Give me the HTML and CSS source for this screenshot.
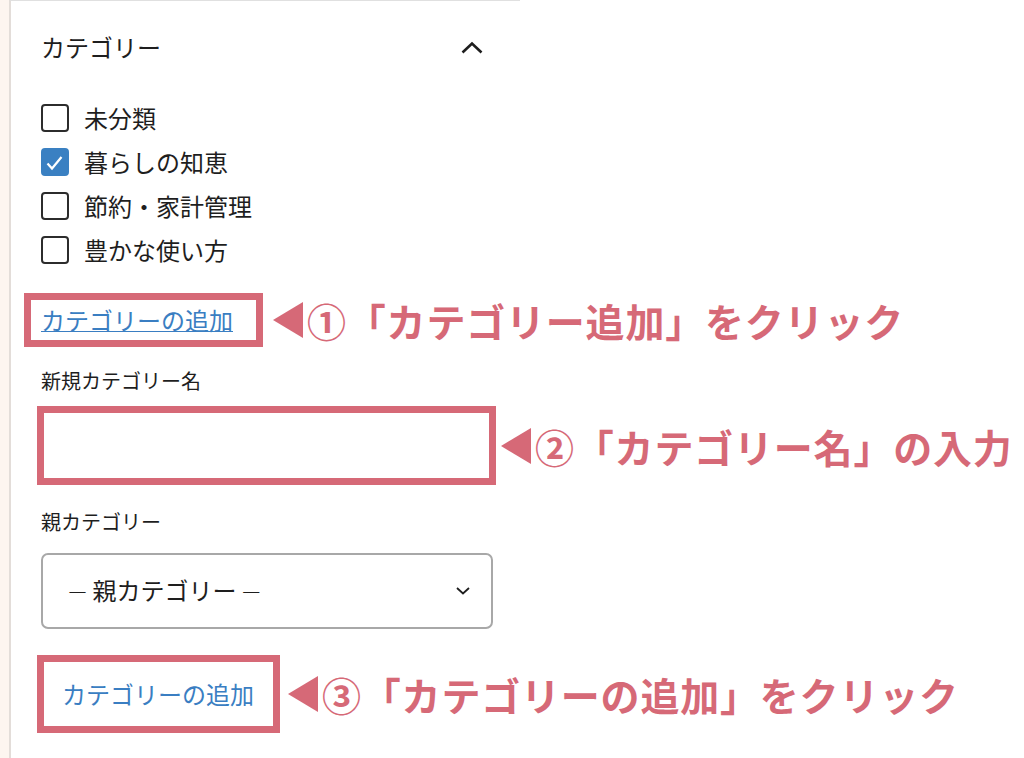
FILE: index.html
```html
<!DOCTYPE html>
<html lang="ja">
<head>
<meta charset="utf-8">
<title>カテゴリー</title>
<link rel="stylesheet" href="styles.css">
</head>
<body>
<div class="page">
  <div class="strip"></div>
  <section class="panel">
    <header class="panel-head">
      <h2 class="panel-title">カテゴリー</h2>
      <svg class="chev-up" width="24" height="24" viewBox="0 0 24 24"><path d="M2.5 17.5 L12 8.5 L21.5 17.5" fill="none" stroke="#1e1e1e" stroke-width="2.6"/></svg>
    </header>
    <ul class="cats">
      <li class="cat"><span class="box"></span><span>未分類</span></li>
      <li class="cat"><span class="box on"><svg width="28" height="28" viewBox="0 0 28 28"><path d="M6.5 15.5 L11 20.5 L20.5 9" fill="none" stroke="#fff" stroke-width="2.2"/></svg></span><span>暮らしの知恵</span></li>
      <li class="cat"><span class="box"></span><span>節約・家計管理</span></li>
      <li class="cat"><span class="box"></span><span>豊かな使い方</span></li>
    </ul>
    <div class="row row-1">
      <div class="mark mark-link"><a class="link" href="#">カテゴリーの追加</a></div>
      <div class="note"><span class="tri"></span><span>①「カテゴリー追加」をクリック</span></div>
    </div>
    <label class="field-label">新規カテゴリー名</label>
    <div class="row row-2">
      <div class="mark mark-input"></div>
      <div class="note"><span class="tri"></span><span>②「カテゴリー名」の入力</span></div>
    </div>
    <label class="field-label parent">親カテゴリー</label>
    <div class="select"><span class="select-text"><span class="dash">—</span> 親カテゴリー <span class="dash">—</span></span><svg width="14" height="8" viewBox="0 0 14 8"><path d="M1 1 L7 6.5 L13 1" fill="none" stroke="#1e1e1e" stroke-width="1.8"/></svg></div>
    <div class="row row-3">
      <div class="mark mark-btn">カテゴリーの追加</div>
      <div class="note"><span class="tri"></span><span>③「カテゴリーの追加」をクリック</span></div>
    </div>
  </section>
</div>
</body>
</html>
```

FILE: styles.css
```css
body {
  margin: 0;
  background: #fff;
  font-family: "Noto Sans CJK JP", "Noto Sans", sans-serif;
  color: #1e1e1e;
}
.page {
  display: flex;
  height: 758px;
  overflow: hidden;
}
.strip {
  width: 9px;
  flex: none;
  background: #fdf5f0;
}
.panel {
  flex: none;
  width: 452px;
  padding: 0 27px 0 30px;
  border-left: 2px solid #e3ddd9;
  border-top: 1px solid #e0e0e0;
}
.panel-head {
  height: 92px;
  display: flex;
  align-items: center;
  justify-content: space-between;
  padding-right: 9px;
}
.panel-title {
  margin: 0;
  font-size: 24px;
  font-weight: 400;
  line-height: 32px;
}
.chev-up { display: block; }
.cats {
  list-style: none;
  margin: 11px 0 0;
  padding: 0;
  display: flex;
  flex-direction: column;
  gap: 16px;
}
.cat {
  display: flex;
  align-items: center;
  gap: 15px;
  height: 28px;
  font-size: 24px;
  line-height: 28px;
}
.box {
  width: 28px;
  height: 28px;
  box-sizing: border-box;
  border: 2px solid #2c2c2c;
  border-radius: 4px;
  flex: none;
  position: relative;
}
.box.on {
  background: #3a80c2;
  border-color: #3a80c2;
}
.box.on svg {
  position: absolute;
  left: -2px;
  top: -2px;
}
.row {
  display: flex;
  align-items: center;
  white-space: nowrap;
}
.mark {
  flex: none;
  box-sizing: border-box;
  border: 7px solid #d66977;
  background: #fff;
}
.row-1 {
  margin: 29px 0 0 -17px;
  gap: 10px;
}
.mark-link {
  height: 54px;
  padding: 0 23px 0 10px;
  font-size: 24px;
  line-height: 40px;
}
.link {
  color: #3a7ec2;
  text-decoration: underline;
  text-decoration-thickness: 1px;
}
.field-label {
  display: block;
  font-size: 20px;
  line-height: 28px;
  margin-top: 20px;
}
.field-label.parent { margin-top: 23px; }
.row-2 {
  margin: 11px 0 0 -4px;
  gap: 5px;
}
.mark-input {
  width: 459px;
  height: 79px;
}
.select {
  margin-top: 17px;
  height: 76px;
  box-sizing: border-box;
  border: 2px solid #a8a8a8;
  border-radius: 7px;
  display: flex;
  align-items: center;
  justify-content: space-between;
  padding: 0 21px 0 25px;
  font-size: 24px;
}
.select-text { line-height: 32px; }
.dash {
  font-size: 19px;
  font-weight: 700;
}
.select svg { display: block; }
.row-3 {
  margin: 26px 0 0 -4px;
  gap: 8px;
}
.mark-btn {
  height: 78px;
  padding: 0 19px 0 18px;
  font-size: 24px;
  line-height: 64px;
  color: #3a7ec2;
}
.note {
  display: flex;
  align-items: center;
  gap: 4px;
  color: #d66977;
  font-size: 39px;
  font-weight: 700;
  line-height: 48px;
  letter-spacing: 0.8px;
}
.tri {
  flex: none;
  width: 0;
  height: 0;
  border-right: 30px solid #d66977;
  border-top: 18px solid transparent;
  border-bottom: 18px solid transparent;
}
```
